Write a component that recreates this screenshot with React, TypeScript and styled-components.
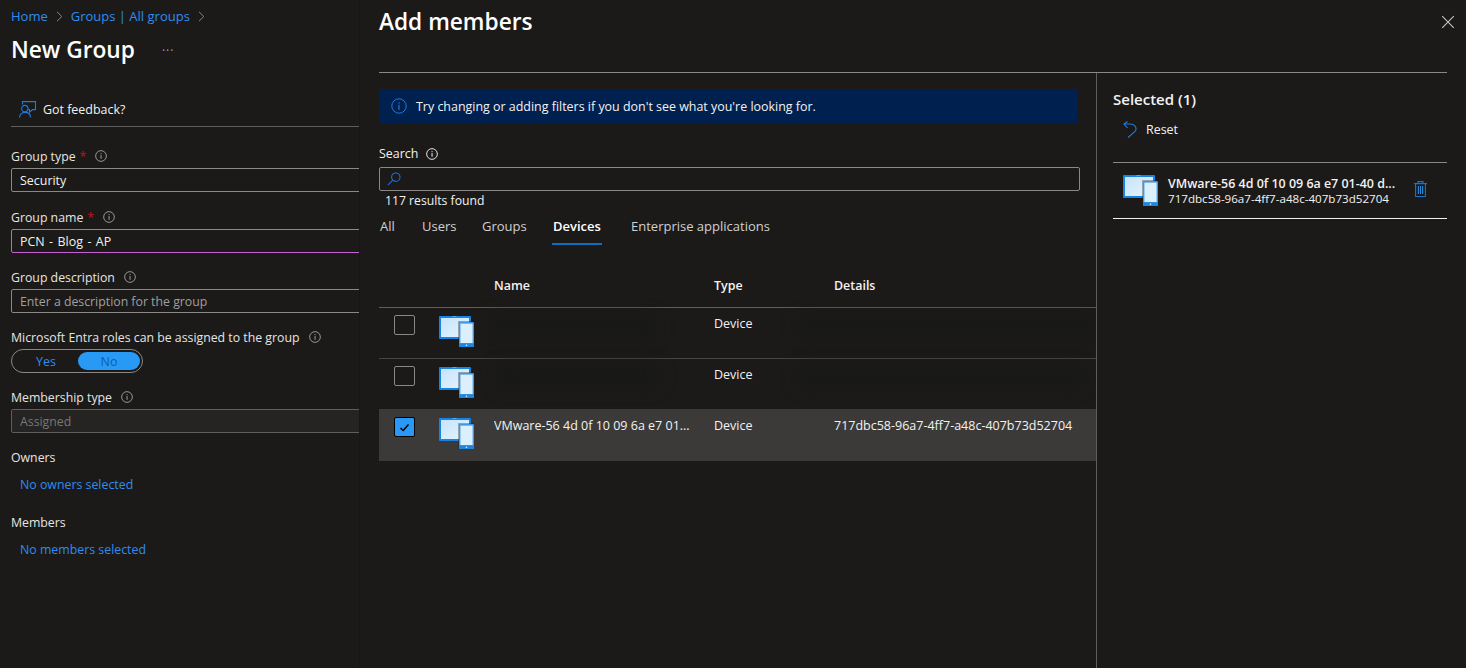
import React from "react";
import styled, { createGlobalStyle } from "styled-components";

const Global = createGlobalStyle`
  html, body { margin: 0; padding: 0; background: #1b1a19; }
  body { font-family: "Open Sans", "Noto Sans", "Liberation Sans", sans-serif; font-size: 12.45px; color: #f3f2f1; }
  * { box-sizing: border-box; }
`;

const Page = styled.div`
  display: flex;
  width: 1466px;
  height: 668px;
  overflow: hidden;
  background: #1b1a19;
`;

const LeftPane = styled.div`
  width: 359px;
  flex: none;
  padding: 7px 0 0 11px;
  overflow: hidden;
  display: flex;
  flex-direction: column;
`;

const Crumbs = styled.nav`
  display: flex;
  align-items: center;
  height: 18px;
  gap: 8px;
`;

const CrumbLink = styled.a`
  color: #2f8cf0;
  font-size: 13px;
`;

const TitleRow = styled.div`
  display: flex;
  align-items: center;
  height: 34px;
  margin-top: 8px;
  gap: 27px;
`;

const Title = styled.h1`
  margin: 0;
  font-size: 22.7px;
  font-weight: 600;
  color: #fff;
  line-height: 34px;
`;

const More = styled.span`
  color: #a19f9d;
  font-size: 12px;
  letter-spacing: 1px;
  line-height: 12px;
  margin-top: 2px;
`;

const FeedbackBar = styled.div`
  display: flex;
  align-items: center;
  gap: 6px;
  height: 34px;
  margin-top: 25px;
  padding-left: 8px;
  color: #f3f2f1;
`;

const Rule = styled.div`
  height: 1px;
  background: #605e5c;
`;

const Fields = styled.div`
  display: flex;
  flex-direction: column;
  margin-top: 19px;
`;

const Field = styled.div<{ $gap?: number }>`
  display: flex;
  flex-direction: column;
  margin-bottom: ${(p) => p.$gap ?? 14}px;
`;

const LabelRow = styled.div`
  display: flex;
  align-items: center;
  height: 20px;
  margin-bottom: 2px;
  color: #e6e5e3;
  font-size: 12.3px;
  gap: 3px;
  white-space: nowrap;
`;

const Star = styled.span`
  color: #c50f1f;
  margin-left: 1px;
`;

const InfoMark = styled.svg<{ $drop?: boolean }>`
  width: 12px;
  height: 12px;
  margin-left: 6px;
  margin-top: ${(p) => (p.$drop ? 2 : 0)}px;
  flex: none;
`;

const TextBox = styled.div<{ $tone?: "focus" | "disabled" | "normal" }>`
  height: 24px;
  margin-right: -4px;
  padding-left: 8px;
  display: flex;
  align-items: center;
  border: 1px solid ${(p) => (p.$tone === "focus" ? "#c65fd4" : p.$tone === "disabled" ? "#605e5c" : "#8a8886")};
  border-radius: 2px;
  background: ${(p) => (p.$tone === "disabled" ? "#252423" : "transparent")};
`;

const NameValue = styled.span`
  word-spacing: 1.2px;
`;

const Ghost = styled.span<{ $dim?: boolean }>`
  font-size: 12.3px;
  color: ${(p) => (p.$dim ? "#797775" : "#a19f9d")};
`;

const Toggle = styled.div`
  width: 132px;
  height: 24px;
  border: 1px solid #8a8886;
  border-radius: 12px;
  padding: 2px;
  display: flex;
`;

const ToggleItem = styled.span<{ $on?: boolean }>`
  flex: none;
  width: ${(p) => (p.$on ? 62 : 64)}px;
  display: flex;
  align-items: center;
  justify-content: center;
  border-radius: 9px;
  color: ${(p) => (p.$on ? "#0f5ea8" : "#2f8cf0")};
  background: ${(p) => (p.$on ? "#2899f5" : "transparent")};
`;

const LinkLine = styled.a`
  color: #2f8cf0;
  padding-left: 9px;
  margin-top: 6px;
  line-height: 20px;
  display: block;
  font-size: 12.35px;
`;

const Panel = styled.section`
  flex: 1;
  min-width: 0;
  border-left: 1px solid #181716;
  padding-left: 19px;
  padding-right: 19px;
  display: flex;
  flex-direction: column;
`;

const PanelHead = styled.header`
  height: 72px;
  flex: none;
  padding-top: 6px;
  display: flex;
  justify-content: space-between;
`;

const PanelTitle = styled.h2`
  margin: 0;
  font-size: 22.7px;
  font-weight: 600;
  color: #fff;
  line-height: 32px;
`;

const Close = styled.button`
  width: 14px;
  height: 14px;
  padding: 0;
  margin: 9px -8px 0 0;
  background: none;
  border: 0;
  display: block;
  line-height: 0;
`;

const PanelBody = styled.div`
  flex: 1;
  display: flex;
  border-top: 1px solid #8a8886;
  min-height: 0;
`;

const Main = styled.div`
  width: 718px;
  flex: none;
  padding-top: 16px;
  border-right: 1px solid #605e5c;
  display: flex;
  flex-direction: column;
  overflow: hidden;
`;

const Banner = styled.div`
  width: 699px;
  height: 34px;
  background: #002050;
  display: flex;
  align-items: center;
  gap: 9px;
  padding-left: 12px;
  color: #f3f2f1;
`;

const SearchLabel = styled.div`
  display: flex;
  align-items: center;
  height: 20px;
  margin-top: 20px;
  gap: 2px;
`;

const SearchBox = styled.div`
  width: 701px;
  height: 24px;
  margin-top: 4px;
  border: 1px solid #8a8886;
  border-radius: 2px;
  display: flex;
  align-items: center;
  padding-left: 7px;
`;

const ResultCount = styled.div`
  padding-left: 6px;
  line-height: 18px;
  margin-top: 1px;
  font-size: 12.2px;
`;

const Tabs = styled.div`
  display: flex;
  margin-top: 6px;
  height: 39px;
  padding-left: 1px;
  font-size: 13px;
`;

const Tab = styled.div<{ $on?: boolean; $w: number }>`
  width: ${(p) => p.$w}px;
  flex: none;
  height: 31px;
  line-height: 20px;
  font-weight: ${(p) => (p.$on ? 600 : 400)};
  color: ${(p) => (p.$on ? "#fff" : "#d2d0ce")};
  position: relative;
  white-space: nowrap;
`;

const TabBar = styled.span`
  position: absolute;
  left: -1px;
  width: 50px;
  bottom: 2px;
  height: 2px;
  background: #106ebe;
`;

const Row = styled.div<{ $selected?: boolean; $line?: string }>`
  display: grid;
  grid-template-columns: 115px 220px 120px 1fr;
  height: 51px;
  background: ${(p) => (p.$selected ? "#3b3a39" : "transparent")};
  border-bottom: 1px solid ${(p) => p.$line ?? (p.$selected ? "transparent" : "#484644")};
`;

const HeaderRow = styled(Row)`
  height: 53px;
  font-weight: 600;
  color: #f3f2f1;
  border-bottom-color: #605e5c;
  padding-top: 21px;
`;

const Cell = styled.div`
  padding-top: 6px;
  line-height: 20px;
  font-size: 12.5px;
  white-space: nowrap;
  overflow: hidden;
`;

const HeadCell = styled.div`
  line-height: 20px;
`;

const IconCell = styled.div`
  display: flex;
  padding: 7px 0 0 15px;
  gap: 24px;
`;

const Box = styled.span<{ $on?: boolean }>`
  width: 21px;
  height: 20px;
  flex: none;
  border: 1px solid ${(p) => (p.$on ? "#000" : "#8a8886")};
  border-radius: 2px;
  background: ${(p) => (p.$on ? "#2899f5" : "transparent")};
  display: flex;
  align-items: center;
  justify-content: center;
`;

const DeviceSvg = styled.svg<{ $drop?: boolean }>`
  flex: none;
  display: block;
  margin-top: ${(p) => (p.$drop ? 1 : 0)}px;
`;

const Smudge = styled.div<{ $w: number; $left: number; $top: number }>`
  width: ${(p) => p.$w}px;
  height: 20px;
  margin: ${(p) => p.$top}px 0 0 ${(p) => p.$left}px;
  background: #181817;
  filter: blur(8px);
`;

const Side = styled.aside`
  flex: 1;
  min-width: 0;
  padding: 16px 0 0 16px;
  display: flex;
  flex-direction: column;
`;

const SideTitle = styled.div`
  font-size: 15px;
  font-weight: 600;
  line-height: 20px;
  color: #f3f2f1;
`;

const ResetBar = styled.div`
  display: flex;
  align-items: center;
  gap: 9px;
  height: 20px;
  margin-top: 10px;
  padding-left: 10px;
`;

const SelectedItem = styled.div`
  margin-top: 23px;
  height: 57px;
  border-top: 1px solid #8a8886;
  border-bottom: 1px solid #f3f2f1;
  display: flex;
  align-items: flex-start;
  padding: 12px 0 0 10px;
`;

const ItemText = styled.div`
  margin-left: 10px;
  width: 238px;
  flex: none;
  padding-top: 1px;
`;

const ItemName = styled.div`
  font-weight: 600;
  line-height: 15px;
  white-space: nowrap;
  color: #f3f2f1;
`;

const ItemId = styled.div`
  line-height: 15px;
  font-size: 11.6px;
  white-space: nowrap;
`;

const TrashButton = styled.span`
  display: block;
  margin: 6px 0 0 8px;
  line-height: 0;
`;

const Info = ({ color = "#a19f9d", drop }: { color?: string; drop?: boolean }) => (
  <InfoMark $drop={drop} viewBox="0 0 13 13" fill="none">
    <circle cx="6.5" cy="6.5" r="5.8" stroke={color} strokeWidth="1" />
    <rect x="6" y="5.5" width="1.1" height="4" fill={color} />
    <rect x="6" y="3.4" width="1.1" height="1.1" fill={color} />
  </InfoMark>
);

const Chevron = () => (
  <svg width="7" height="11" viewBox="0 0 7 11" fill="none">
    <path d="M1 .8 5.8 5.5 1 10.2" stroke="#8a8886" strokeWidth="1" />
  </svg>
);

const Device = ({ drop }: { drop?: boolean }) => (
  <DeviceSvg $drop={drop} width="35" height="31" viewBox="0 0 35 31">
    <defs>
      <linearGradient id="scr" x1="0" y1="0" x2="1" y2="1">
        <stop offset="0" stopColor="#c6e4fb" />
        <stop offset="1" stopColor="#e6f4fe" />
      </linearGradient>
    </defs>
    <rect x="0" y="0" width="32" height="23" rx="1" fill="#1584e2" />
    <rect x="13.5" y="0" width="4" height="1" fill="#58a9ee" />
    <rect x="2" y="2" width="28" height="19" fill="url(#scr)" />
    <rect x="19" y="5" width="16" height="26" fill="#1b1a19" opacity=".35" />
    <rect x="20" y="6" width="15" height="25" rx="1" fill="#3d97ea" />
    <rect x="21.4" y="7.6" width="12.2" height="19.4" fill="#dceffd" />
    <rect x="20" y="27.5" width="15" height="3.5" fill="#1f86e0" />
    <circle cx="27.5" cy="29.3" r=".8" fill="#e8f4fe" />
  </DeviceSvg>
);

const Check = () => (
  <svg width="11" height="9" viewBox="0 0 11 9" fill="none">
    <path d="M1.5 5 4.2 7.5 9.5 1.5" stroke="#000" strokeWidth="1.5" />
  </svg>
);

const FeedbackIcon = () => (
  <svg width="18" height="17" viewBox="0 0 18 17" fill="none" stroke="#1f7ae0" strokeWidth="1.1">
    <path d="M3.5 3.5V.6h13v8h-3l-3 2.6V8.6H9.5" />
    <circle cx="5.8" cy="7.6" r="3.2" />
    <path d="M.5 16.6c0-3.2 2.3-5.2 5.5-5.2s5.5 2 5.5 5.2" />
  </svg>
);

export default function App() {
  return (
    <Page>
      <Global />
      <LeftPane>
        <Crumbs>
          <CrumbLink>Home</CrumbLink>
          <Chevron />
          <CrumbLink>Groups | All groups</CrumbLink>
          <Chevron />
        </Crumbs>
        <TitleRow>
          <Title>New Group</Title>
          <More>···</More>
        </TitleRow>
        <FeedbackBar>
          <FeedbackIcon />
          <span>Got feedback?</span>
        </FeedbackBar>
        <Rule />
        <Fields>
          <Field $gap={15}>
            <LabelRow>Group type <Star>*</Star><Info /></LabelRow>
            <TextBox>Security</TextBox>
          </Field>
          <Field>
            <LabelRow>Group name <Star>*</Star><Info /></LabelRow>
            <TextBox $tone="focus"><NameValue>PCN - Blog - AP</NameValue></TextBox>
          </Field>
          <Field>
            <LabelRow>Group description <Info /></LabelRow>
            <TextBox><Ghost>Enter a description for the group</Ghost></TextBox>
          </Field>
          <Field>
            <LabelRow>Microsoft Entra roles can be assigned to the group <Info /></LabelRow>
            <Toggle>
              <ToggleItem>Yes</ToggleItem>
              <ToggleItem $on>No</ToggleItem>
            </Toggle>
          </Field>
          <Field>
            <LabelRow>Membership type <Info /></LabelRow>
            <TextBox $tone="disabled"><Ghost $dim>Assigned</Ghost></TextBox>
          </Field>
          <Field $gap={17}>
            <LabelRow>Owners</LabelRow>
            <LinkLine>No owners selected</LinkLine>
          </Field>
          <Field>
            <LabelRow>Members</LabelRow>
            <LinkLine>No members selected</LinkLine>
          </Field>
        </Fields>
      </LeftPane>
      <Panel>
        <PanelHead>
          <PanelTitle>Add members</PanelTitle>
          <Close aria-label="Close">
            <svg width="14" height="14" viewBox="0 0 14 14" fill="none">
              <path d="M1.2 1.2 12.8 12.8M12.8 1.2 1.2 12.8" stroke="#c8c6c4" strokeWidth="1.1" />
            </svg>
          </Close>
        </PanelHead>
        <PanelBody>
          <Main>
            <Banner>
              <svg width="16" height="16" viewBox="0 0 16 16" fill="none">
                <circle cx="8" cy="8" r="7.2" stroke="#1f7ae0" />
                <rect x="7.4" y="6.8" width="1.2" height="5" fill="#1f7ae0" />
                <rect x="7.4" y="4.3" width="1.2" height="1.3" fill="#1f7ae0" />
              </svg>
              <span>Try changing or adding filters if you don't see what you're looking for.</span>
            </Banner>
            <SearchLabel>Search <Info color="#f3f2f1" drop /></SearchLabel>
            <SearchBox>
              <svg width="14" height="14" viewBox="0 0 14 14" fill="none" stroke="#1f6fd0" strokeWidth="1.1">
                <circle cx="8.8" cy="5.2" r="4.2" />
                <path d="M5.8 8.2.8 13.2" />
              </svg>
            </SearchBox>
            <ResultCount>117 results found</ResultCount>
            <Tabs>
              <Tab $w={42}>All</Tab>
              <Tab $w={60}>Users</Tab>
              <Tab $w={71}>Groups</Tab>
              <Tab $w={78} $on>Devices<TabBar /></Tab>
              <Tab $w={160}>Enterprise applications</Tab>
            </Tabs>
            <HeaderRow>
              <span />
              <HeadCell>Name</HeadCell>
              <HeadCell>Type</HeadCell>
              <HeadCell>Details</HeadCell>
            </HeaderRow>
            <Row>
              <IconCell><Box /><Device drop /></IconCell>
              <Smudge $w={165} $left={-4} $top={8} />
              <Cell>Device</Cell>
              <Smudge $w={296} $left={-34} $top={8} />
            </Row>
            <Row $line="#3b3a39">
              <IconCell><Box /><Device drop /></IconCell>
              <Smudge $w={160} $left={4} $top={8} />
              <Cell>Device</Cell>
              <Smudge $w={280} $left={-34} $top={9} />
            </Row>
            <Row $selected>
              <IconCell><Box $on><Check /></Box><Device drop /></IconCell>
              <Cell>VMware-56 4d 0f 10 09 6a e7 01...</Cell>
              <Cell>Device</Cell>
              <Cell>717dbc58-96a7-4ff7-a48c-407b73d52704</Cell>
            </Row>
          </Main>
          <Side>
            <SideTitle>Selected (1)</SideTitle>
            <ResetBar>
              <svg width="14" height="17" viewBox="0 0 14 17" fill="none" stroke="#1f7ae0" strokeWidth="1.1">
                <path d="M4.5.5 1 3l3.5 4" />
                <path d="M1 3h6c5 0 7.5 4 5 7.5l-7 6" />
              </svg>
              <span>Reset</span>
            </ResetBar>
            <SelectedItem>
              <Device />
              <ItemText>
                <ItemName>VMware-56 4d 0f 10 09 6a e7 01-40 d...</ItemName>
                <ItemId>717dbc58-96a7-4ff7-a48c-407b73d52704</ItemId>
              </ItemText>
              <TrashButton>
                <svg width="13" height="16" viewBox="0 0 13 16" fill="none" stroke="#1673d0" strokeWidth="1.1">
                  <path d="M0 2.6h13M4 2.6V.6h5v2M1.6 2.6v12.9h9.8V2.6" />
                  <path d="M4.4 5v8M6.5 5v8M8.6 5v8" stroke="#2b88d8" />
                </svg>
              </TrashButton>
            </SelectedItem>
          </Side>
        </PanelBody>
      </Panel>
    </Page>
  );
}
